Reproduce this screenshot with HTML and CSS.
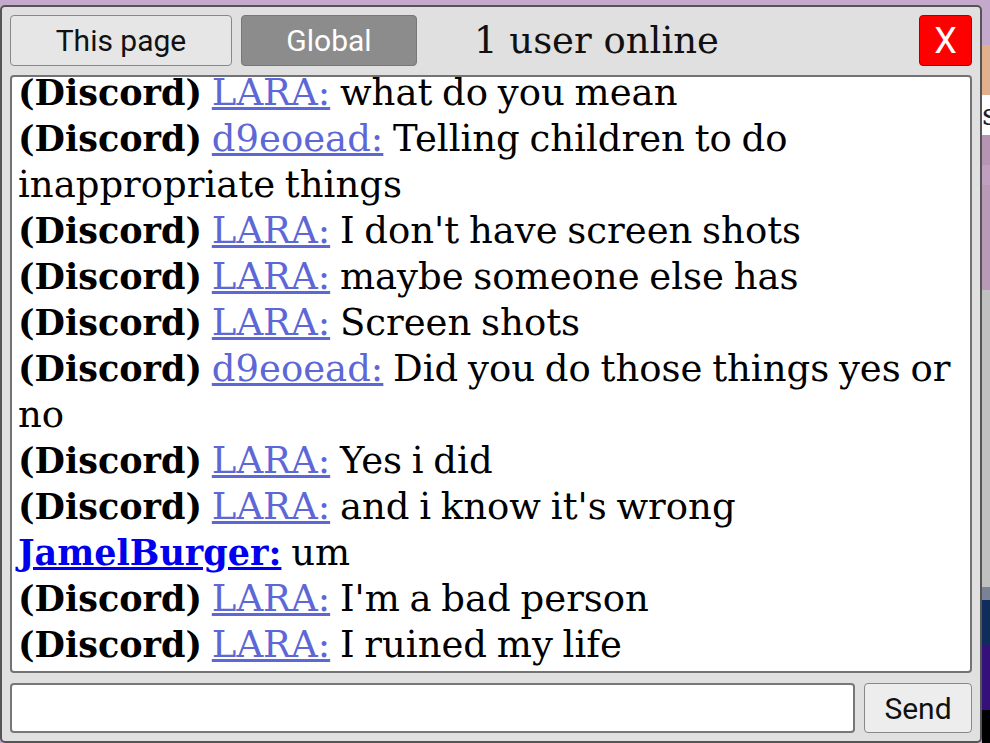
FILE: index.html
```html
<!DOCTYPE html>
<html lang="en">
<head>
    <meta charset="UTF-8">
    <meta name="viewport" content="width=device-width, initial-scale=1.0">
    <title>Chat</title>
    <link rel="stylesheet" href="styles.css">
</head>
<body>
    <div class="chat">
        <div class="chat-top">
            <button class="tab">This page</button>
            <button class="tab active">Global</button>
            <span class="online">1 user online</span>
            <button class="close">X</button>
        </div>

        <div class="messages">
            <div class="msg"><b>(Discord)</b> <a href="#" class="ext">LARA:</a> what do you mean</div>
            <div class="msg"><b>(Discord)</b> <a href="#" class="ext">d9eoead:</a> Telling children to do inappropriate things</div>
            <div class="msg"><b>(Discord)</b> <a href="#" class="ext">LARA:</a> I don't have screen shots</div>
            <div class="msg"><b>(Discord)</b> <a href="#" class="ext">LARA:</a> maybe someone else has</div>
            <div class="msg"><b>(Discord)</b> <a href="#" class="ext">LARA:</a> Screen shots</div>
            <div class="msg"><b>(Discord)</b> <a href="#" class="ext">d9eoead:</a> Did you do those things yes or no</div>
            <div class="msg"><b>(Discord)</b> <a href="#" class="ext">LARA:</a> Yes i did</div>
            <div class="msg"><b>(Discord)</b> <a href="#" class="ext">LARA:</a> and i know it's wrong</div>
            <div class="msg"><a href="#" class="user">JamelBurger:</a> um</div>
            <div class="msg"><b>(Discord)</b> <a href="#" class="ext">LARA:</a> I'm a bad person</div>
            <div class="msg"><b>(Discord)</b> <a href="#" class="ext">LARA:</a> I ruined my life</div>
        </div>

        <form class="chat-form">
            <input type="text" class="chat-input">
            <button type="submit" class="send">Send</button>
        </form>
    </div>

    <div class="side">
        <div class="band b1"></div>
        <div class="band b2"></div>
        <div class="band b3">s</div>
        <div class="band b4"></div>
        <div class="band b5"></div>
        <div class="band b6"></div>
        <div class="band b7"></div>
        <div class="band b8"></div>
        <div class="band b9"></div>
        <div class="band b10"></div>
        <div class="band b11"></div>
    </div>
</body>
</html>
```

FILE: styles.css
```css
body {
    margin: 0;
    display: flex;
    height: 743px;
    overflow: hidden;
    background-color: #c4a9cc;
}

.chat {
    box-sizing: border-box;
    width: 982px;
    height: 738px;
    margin-top: 5px;
    padding: 8px;
    display: flex;
    flex-direction: column;
    gap: 9px;
    background-color: #e0e0e0;
    border: 2px solid #555;
    border-radius: 5px;
}

.chat-top {
    display: flex;
    align-items: center;
    gap: 9px;
    height: 51px;
}

.tab, .send {
    height: 51px;
    padding: 0;
    font-family: Roboto, sans-serif;
    font-size: 30px;
    color: #111;
    background-color: #e6e6e6;
    border: 1px solid #888;
    border-radius: 4px;
}

.tab {
    width: 222px;
}

.tab.active {
    width: 176px;
    color: #fff;
    background-color: #8c8c8c;
    border-color: #777;
}

.online {
    flex: 1;
    margin-left: 48px;
    font-family: "DejaVu Serif", serif;
    font-size: 37px;
    color: #111;
}

.close {
    width: 53px;
    height: 51px;
    padding: 0;
    font-family: Roboto, sans-serif;
    font-size: 36px;
    color: #fff;
    background-color: #f00;
    border: 1px solid #a00;
    border-radius: 4px;
}

.messages {
    flex: 1;
    min-height: 0;
    display: flex;
    flex-direction: column;
    justify-content: flex-end;
    overflow: hidden;
    padding: 0 6px 3px;
    background-color: #fff;
    border: 2px solid #737373;
    border-radius: 4px;
    font-family: "DejaVu Serif", serif;
    font-size: 37px;
    line-height: 46px;
    word-spacing: -2px;
    color: #000;
}

.msg b {
    font-size: 35px;
}

.ext {
    color: #5d67d6;
}

.user {
    font-size: 35px;
    color: #0000ee;
    font-weight: bold;
}

.chat-form {
    display: flex;
    gap: 9px;
    margin: 1px 0 0;
}

.chat-input {
    flex: 1;
    height: 50px;
    box-sizing: border-box;
    background-color: #fff;
    border: 2px solid #777;
    border-radius: 4px;
}

.send {
    width: 108px;
    height: 50px;
    background-color: #ededed;
}

.side {
    flex: 1;
    display: flex;
    flex-direction: column;
    overflow: hidden;
}

.band {
    font-family: "DejaVu Serif", serif;
    font-size: 30px;
    line-height: 40px;
}

.b1 { height: 45px; background-color: #c4a9cc; }
.b2 { height: 50px; background-color: #e2b08c; }
.b3 { height: 40px; background-color: #fff; color: #222; }
.b4 { height: 30px; background-color: #b594b4; }
.b5 { height: 20px; background-color: #c09fc0; }
.b6 { height: 105px; background-color: #b89ab6; }
.b7 { height: 297px; background-color: #c0c0c0; }
.b8 { height: 13px; background-color: #7b8295; }
.b9 { height: 45px; background-color: #0f2c5c; }
.b10 { height: 65px; background-color: #36107a; }
.b11 { height: 33px; background-color: #000; }
```
